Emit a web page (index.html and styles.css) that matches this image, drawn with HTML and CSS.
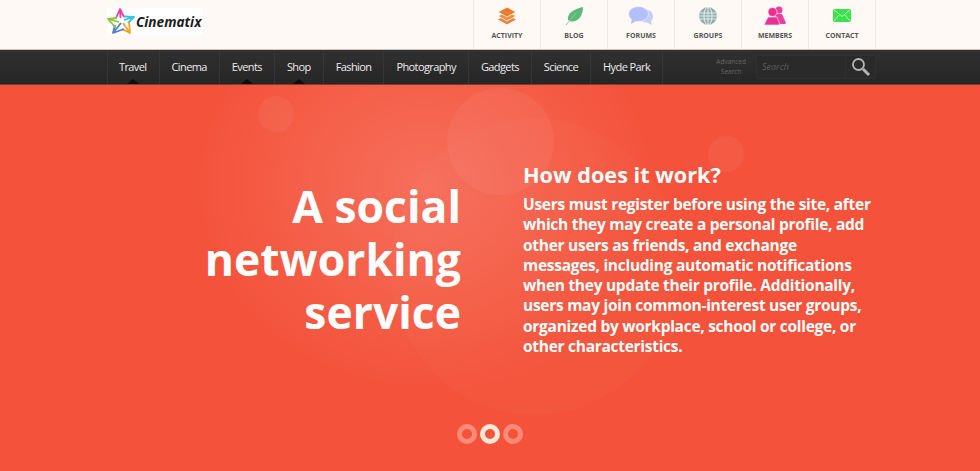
FILE: index.html
```html
<!DOCTYPE html>
<html lang="en">
<head>
<meta charset="utf-8">
<title>Cinematix</title>
<link rel="stylesheet" href="styles.css">
</head>
<body>
<header class="top">
  <div class="wrap top-inner">
    <a class="logo">
      <svg class="logo-star" width="29" height="27" viewBox="0 0 29 27" fill="none" stroke-width="1.800" stroke-linejoin="round">
        <path d="M9 10 L13 1 L17 9 M13 1 L13.500 10" stroke="#e8409c"/>
        <path d="M17 8.500 L27 9 L21 15 M27 9 L17 12" stroke="#35c4e0"/>
        <path d="M22 14 L23 25 L15 21 M23 25 L16 15" stroke="#f2a428"/>
        <path d="M17 21 L6 25 L8 17 M6 25 L14 15" stroke="#4f7fd0"/>
        <path d="M9 20 L1 11 L10 10 M1 11 L12 14" stroke="#8cc63f"/>
      </svg>
      <span class="logo-text">Cinematix</span>
    </a>
    <nav class="quick">
      <a class="quick-item">
        <svg width="20" height="20" viewBox="0 0 20 20"><path d="M10 9 L19 13.500 L10 18.500 L1 13.500Z" fill="#e8873c"/><path d="M10 5.500 L19 10 L10 15 L1 10Z" fill="#ee8c3f" stroke="#fff9f6" stroke-width=".8"/><path d="M10 1 L19 6 L10 11 L1 6Z" fill="#e77d2e" stroke="#fff9f6" stroke-width=".8"/></svg>
        <span>ACTIVITY</span>
      </a>
      <a class="quick-item">
        <svg width="20" height="20" viewBox="0 0 20 20"><path d="M4 14 C3 7 10 3 19 1 C19 9 15 16 7 15.500Z" fill="#5dbb7a"/><path d="M2 19 L12 7" stroke="#7fcf9a" stroke-width="1" fill="none"/></svg>
        <span>BLOG</span>
      </a>
      <a class="quick-item">
        <svg width="26" height="20" viewBox="0 0 26 20"><path d="M15 4 C21 3 25 6 25 10 C25 13 24 14 23 15 L24 19 L19 16.500 C16 17 13 15 12 13Z" fill="#c5cdfb"/><ellipse cx="10.500" cy="8" rx="10" ry="7.500" fill="#b5bffb" stroke="#fff9f6" stroke-width=".6"/><path d="M4 12 L3 18 L10 14Z" fill="#b5bffb"/></svg>
        <span>FORUMS</span>
      </a>
      <a class="quick-item">
        <svg width="20" height="20" viewBox="0 0 20 20" fill="none"><circle cx="10" cy="10" r="9" fill="#8fb0ac"/><g stroke="#fff9f6" stroke-width=".8"><path d="M1.500 7 H18.500 M1 10 H19 M1.500 13 H18.500"/><ellipse cx="10" cy="10" rx="4" ry="9"/><path d="M10 1 V19"/></g></svg>
        <span>GROUPS</span>
      </a>
      <a class="quick-item">
        <svg width="22" height="20" viewBox="0 0 22 20"><circle cx="15" cy="4" r="3.500" fill="#e8409c"/><path d="M11 8 H18 L22 17 L21 18 H14Z" fill="#e8409c"/><circle cx="8.500" cy="6" r="4.500" fill="#ef2e94" stroke="#fff9f6" stroke-width=".6"/><path d="M4 11 H13 L16 19 H0Z" fill="#ef2e94" stroke="#fff9f6" stroke-width=".6"/></svg>
        <span>MEMBERS</span>
      </a>
      <a class="quick-item">
        <svg width="18" height="20" viewBox="0 0 18 20"><rect x="0" y="3" width="18" height="13" fill="#3ce24c"/><path d="M0 3 L9 10.500 L18 3 M0 16 L6.500 8.500 M18 16 L11.500 8.500" stroke="#d8f8d0" stroke-width=".8" fill="none"/></svg>
        <span>CONTACT</span>
      </a>
    </nav>
  </div>
</header>
<nav class="bar">
  <div class="wrap bar-inner">
    <ul class="menu">
      <li class="menu-item has-sub">Travel</li>
      <li class="menu-item">Cinema</li>
      <li class="menu-item has-sub">Events</li>
      <li class="menu-item has-sub">Shop</li>
      <li class="menu-item">Fashion</li>
      <li class="menu-item">Photography</li>
      <li class="menu-item">Gadgets</li>
      <li class="menu-item">Science</li>
      <li class="menu-item">Hyde Park</li>
    </ul>
    <div class="search">
      <a class="advanced">Advanced<br>Search</a>
      <div class="search-box">
        <span class="search-input">Search</span>
        <span class="search-btn">
          <svg width="20" height="20" viewBox="0 0 20 20" fill="none" stroke="#b4b4b4"><circle cx="7.500" cy="7.500" r="5.500" stroke-width="1.800"/><path d="M12 12 L18 18" stroke-width="3"/></svg>
        </span>
      </div>
    </div>
  </div>
</nav>
<main class="hero">
  <div class="glow"></div>
  <span class="bubble bubble-a"></span>
  <span class="bubble bubble-b"></span>
  <span class="bubble bubble-c"></span>
  <span class="bubble bubble-d"></span>
  <div class="hero-inner">
    <h1 class="hero-title">A social networking service</h1>
    <div class="hero-copy">
      <h2 class="hero-sub">How does it work?</h2>
      <p class="hero-text">Users must register before using the site, after which they may create a personal profile, add other users as friends, and exchange messages, including automatic notifications when they update their profile. Additionally, users may join common-interest user groups, organized by workplace, school or college, or other characteristics.</p>
    </div>
  </div>
  <div class="dots">
    <span class="dot"></span>
    <span class="dot dot-on"></span>
    <span class="dot"></span>
  </div>
</main>
</body>
</html>
```
FILE: styles.css
```css
* { box-sizing: border-box; }
html, body { margin: 0; height: 100%; overflow: hidden; }
body { font-family: "Open Sans", sans-serif; background: #f4523a; display: flex; flex-direction: column; }
.wrap { width: 769px; margin-left: 107px; }

.top { height: 50px; background: #fff9f6; flex: none; border-bottom: 1px solid #c9c6c4; }
.top-inner { display: flex; justify-content: space-between; height: 49px; }
.logo { margin-top: 8px; width: 96px; height: 27px; background: #fff; display: flex; align-items: center; }
.logo-star { flex: none; }
.logo-text { font-weight: 700; font-style: italic; font-size: 13.600px; color: #1c1c1c; }
.quick { display: flex; border-left: 1px solid #eeeae7; }
.quick-item { width: 67px; border-right: 1px solid #eeeae7; display: flex; flex-direction: column; align-items: center; padding-top: 6px; font-size: 7px; font-weight: 700; color: #555; }
.quick-item svg { display: block; }
.quick-item span { margin-top: 5px; line-height: 10px; }

.bar { height: 35px; flex: none; background: linear-gradient(#303030, #262626); border-bottom: 1px solid #7a3d30; }
.bar-inner { display: flex; justify-content: space-between; height: 100%; }
.menu { list-style: none; margin: 0; padding: 0; display: flex; border-left: 1px solid #363636; }
.menu-item { position: relative; padding: 0 12px; line-height: 34px; font-size: 11px; letter-spacing: -.6px; color: #ececec; border-right: 1px solid #363636; }
.menu-item:first-child { padding-left: 11px; }
.has-sub::after { content: ""; position: absolute; left: 50%; bottom: 0; margin-left: -6px; border: 6px solid transparent; border-top: 0; border-bottom: 5px solid #0c0c0c; }
.search { display: flex; align-items: center; }
.advanced { font-size: 6.500px; line-height: 10px; color: #666; text-align: center; margin-right: 10px; }
.search-box { display: flex; width: 120px; height: 24px; border: 1px solid #303030; background: #2a2a2a; border-radius: 2px; }
.search-input { flex: 1; font-size: 9px; font-style: italic; color: #5e5e5e; padding-left: 5px; line-height: 22px; border-right: 1px solid #303030; }
.search-btn { width: 29px; display: flex; align-items: center; justify-content: center; }

.hero { flex: 1; position: relative; overflow: hidden; background: #f4523a; }
.glow { position: absolute; left: 190px; top: -110px; width: 470px; height: 420px; border-radius: 50%; background: radial-gradient(closest-side, rgba(255,255,255,.17), rgba(255,255,255,0)); }
.bubble { position: absolute; border-radius: 50%; background: rgba(255,255,255,.05); }
.bubble-a { left: 258px; top: 11px; width: 36px; height: 36px; }
.bubble-b { left: 447px; top: 3px; width: 107px; height: 107px; }
.bubble-c { left: 708px; top: 51px; width: 36px; height: 36px; }
.bubble-d { left: 390px; top: 33px; width: 290px; height: 297px; background: rgba(255,255,255,.02); }
.hero-inner { position: relative; display: flex; margin-left: 180px; padding-top: 76px; }
.hero-title { margin: 18px 0 0; width: 281px; flex: none; font-size: 44.500px; line-height: 53px; font-weight: 700; color: #fff; text-align: right; }
.hero-copy { margin-left: 62px; width: 349px; }
.hero-sub { margin: 0; font-size: 21.700px; line-height: 28px; font-weight: 700; color: #fff; }
.hero-text { margin: 5px 0 0; font-size: 15.500px; letter-spacing: -.28px; line-height: 20.300px; font-weight: 700; color: #fff; }
.dots { position: absolute; left: 0; right: 0; bottom: 27px; display: flex; justify-content: center; gap: 3px; }
.dot { width: 20px; height: 20px; border-radius: 50%; border: 5px solid #ff8a78; }
.dot-on { border-color: #ffe8d6; }
```
